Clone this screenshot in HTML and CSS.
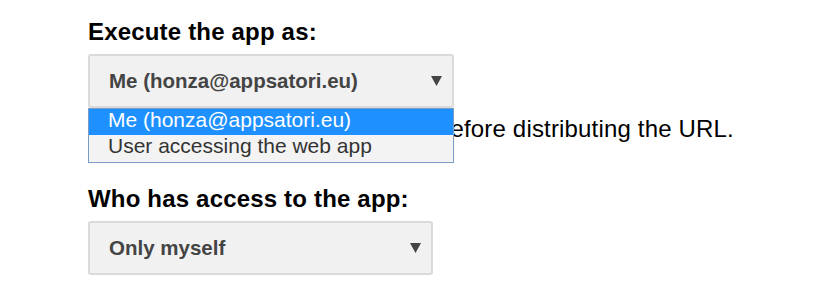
FILE: index.html
```html
<!DOCTYPE html>
<html lang="en">
<head>
    <meta charset="UTF-8">
    <title>Deploy as web app</title>
    <link rel="stylesheet" href="styles.css">
</head>
<body>
    <div class="page">
        <div class="field">
            <h2 class="label">Execute the app as:</h2>
            <div class="select-wrap">
                <div class="select select-wide">
                    <span>Me (honza@appsatori.eu)</span>
                    <svg class="arrow" width="11" height="10" viewBox="0 0 11 10"><polygon points="0,0 11,0 5.5,10" fill="#444"/></svg>
                </div>
                <ul class="dropdown">
                    <li class="option selected">Me (honza@appsatori.eu)</li>
                    <li class="option">User accessing the web app</li>
                </ul>
            </div>
            <p class="note">You need to authorize the script before distributing the URL.</p>
        </div>

        <div class="field field-second">
            <h2 class="label">Who has access to the app:</h2>
            <div class="select select-narrow">
                <span>Only myself</span>
                <svg class="arrow" width="11" height="10" viewBox="0 0 11 10"><polygon points="0,0 11,0 5.5,10" fill="#444"/></svg>
            </div>
        </div>
    </div>
</body>
</html>
```

FILE: styles.css
```css
body {
    margin: 0;
    font-family: "Liberation Sans", Arial, sans-serif;
    color: #000000;
    background-color: #ffffff;
}

.page {
    padding: 18px 0 0 88px;
}

.label {
    margin: 0;
    font-size: 24px;
    line-height: 28px;
    font-weight: bold;
    letter-spacing: 0.18px;
}

.select-wrap {
    position: relative;
}

.select {
    margin-top: 8px;
    height: 54px;
    box-sizing: border-box;
    border: 2px solid #dadada;
    border-radius: 3px;
    background-color: #f1f1f1;
    display: flex;
    align-items: center;
    justify-content: space-between;
    padding: 0 10px 0 19px;
    font-size: 20.5px;
    line-height: 24px;
    font-weight: bold;
    color: #444444;
}

.select-wide {
    width: 366px;
}

.select-narrow {
    width: 345px;
}

.arrow {
    display: block;
}

.dropdown {
    position: absolute;
    top: 100%;
    left: 0;
    width: 366px;
    box-sizing: border-box;
    margin: 0;
    padding: 0;
    list-style: none;
    border: 1px solid #7a9cc6;
    background-color: #f3f3f3;
    font-size: 21px;
    color: #333333;
}

.option {
    padding: 0 0 4px 19px;
    line-height: 22px;
}

.option + .option {
    padding-bottom: 5px;
}

.option.selected {
    background-color: #1e90ff;
    color: #ffffff;
}

.note {
    margin: 7px 0 0;
    font-size: 24px;
    line-height: 28px;
    letter-spacing: 0.17px;
}

.field-second {
    margin-top: 42px;
}
```
